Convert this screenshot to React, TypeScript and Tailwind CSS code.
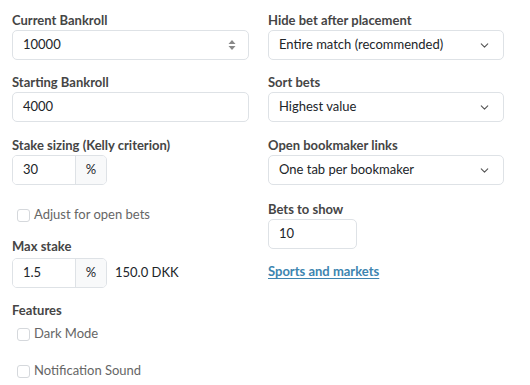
import { ChevronDown } from 'lucide-react';

const font = { fontFamily: 'Lato, "Noto Sans", sans-serif' };

function Label({ children }: { children: React.ReactNode }) {
  return <div className="text-[13px] font-bold text-[#454545] leading-[16px] mb-[2px]">{children}</div>;
}

function TextBox({ value, className = '' }: { value: string; className?: string }) {
  return (
    <div className={`h-[30px] border border-[#dee2e6] rounded-[5px] bg-white flex items-center px-[10px] text-[13px] text-[#212529] ${className}`}>
      {value}
    </div>
  );
}

function Select({ value }: { value: string }) {
  return (
    <div className="h-[30px] border border-[#dee2e6] rounded-[5px] bg-white flex items-center justify-between pl-[10px] pr-[12px] text-[13px] text-[#212529]">
      <span>{value}</span>
      <ChevronDown className="w-[13px] h-[13px] text-[#555]" strokeWidth={2} />
    </div>
  );
}

function PercentGroup({ value }: { value: string }) {
  return (
    <div className="flex h-[30px] w-[95px] border border-[#dee2e6] rounded-[5px] overflow-hidden text-[13px] text-[#212529]">
      <div className="flex-1 bg-white flex items-center px-[10px]">{value}</div>
      <div className="w-[31px] bg-[#f8f9fa] border-l border-[#dee2e6] flex items-center justify-center">%</div>
    </div>
  );
}

function Check({ label }: { label: string }) {
  return (
    <div className="flex items-center gap-[4px] pl-[5px] h-[18px] text-[13px] text-[#666]">
      <span className="w-[13px] h-[13px] border border-[#d5d8dc] rounded-[3px] bg-white" />
      <span>{label}</span>
    </div>
  );
}

export default function App() {
  return (
    <div className="w-[530px] h-[385px] bg-white pl-[12px] pt-[12px]" style={font}>
      <div className="grid grid-cols-[237px_236px] gap-x-[19px]">
        {/* Left column */}
        <div className="flex flex-col">
          <Label>Current Bankroll</Label>
          <div className="h-[30px] border border-[#dee2e6] rounded-[5px] bg-white flex items-center justify-between px-[10px] text-[13px] text-[#212529]">
            <span>10000</span>
            <svg width="8" height="12" viewBox="0 0 8 12" className="mr-[2px]">
              <path d="M4 1 L7.5 5 H0.5 Z" fill="#888" />
              <path d="M4 11 L7.5 7 H0.5 Z" fill="#888" />
            </svg>
          </div>

          <div className="mt-[14px]">
            <Label>Starting Bankroll</Label>
            <TextBox value="4000" />
          </div>

          <div className="mt-[15px]">
            <Label>Stake sizing (Kelly criterion)</Label>
            <PercentGroup value="30" />
          </div>

          <div className="mt-[21px]">
            <Check label="Adjust for open bets" />
          </div>

          <div className="mt-[14px]">
            <Label>Max stake</Label>
            <div className="flex items-center gap-[8px] mt-[4px]">
              <PercentGroup value="1.5" />
              <span className="text-[13px] text-[#212529]">150.0 DKK</span>
            </div>
          </div>

          <div className="mt-[14px]">
            <Label>Features</Label>
            <div className="mt-[7px]">
              <Check label="Dark Mode" />
            </div>
            <div className="mt-[19px]">
              <Check label="Notification Sound" />
            </div>
          </div>
        </div>

        {/* Right column */}
        <div className="flex flex-col">
          <Label>Hide bet after placement</Label>
          <Select value="Entire match (recommended)" />

          <div className="mt-[14px]">
            <Label>Sort bets</Label>
            <Select value="Highest value" />
          </div>

          <div className="mt-[15px]">
            <Label>Open bookmaker links</Label>
            <Select value="One tab per bookmaker" />
          </div>

          <div className="mt-[16px]">
            <Label>Bets to show</Label>
            <TextBox value="10" className="w-[89px]" />
          </div>

          <a href="#" className="mt-[13px] h-[18px] text-[13px] font-bold text-[#3d85b0] underline underline-offset-2 self-start">
            Sports and markets
          </a>
        </div>
      </div>
    </div>
  );
}
